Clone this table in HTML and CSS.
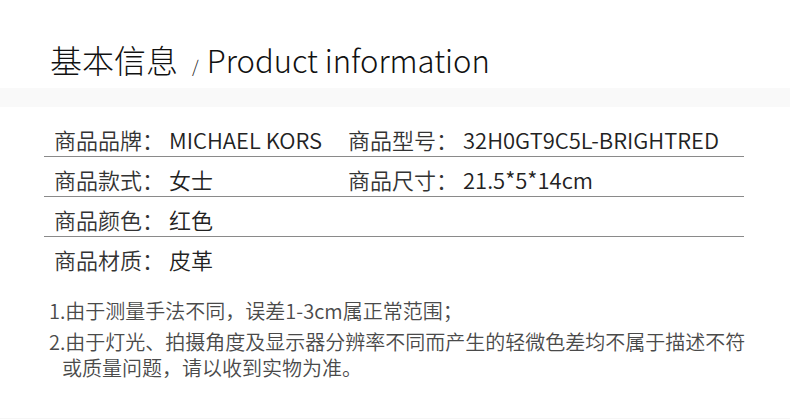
FILE: index.html
```html
<!DOCTYPE html>
<html lang="zh-CN">
<head>
<meta charset="utf-8">
<title>基本信息</title>
<link rel="stylesheet" href="styles.css">
</head>
<body>
<div class="page">
  <header class="head">
    <h1 class="title"><span class="title-cn">基本信息</span><span class="slash">/</span><span class="title-en">Product information</span></h1>
  </header>
  <div class="band"></div>
  <div class="table">
    <div class="row">
      <div class="cell"><span class="label">商品品牌：</span><span class="value">MICHAEL KORS</span></div>
      <div class="cell"><span class="label">商品型号：</span><span class="value">32H0GT9C5L-BRIGHTRED</span></div>
    </div>
    <div class="row">
      <div class="cell"><span class="label">商品款式：</span><span class="value">女士</span></div>
      <div class="cell"><span class="label">商品尺寸：</span><span class="value">21.5*5*14cm</span></div>
    </div>
    <div class="row">
      <div class="cell"><span class="label">商品颜色：</span><span class="value">红色</span></div>
      <div class="cell"></div>
    </div>
    <div class="row last">
      <div class="cell"><span class="label">商品材质：</span><span class="value">皮革</span></div>
      <div class="cell"></div>
    </div>
  </div>
  <div class="notes">
    <p class="note">1.由于测量手法不同，误差1-3cm属正常范围；</p>
    <p class="note">2.由于灯光、拍摄角度及显示器分辨率不同而产生的轻微色差均不属于描述不符或质量问题，请以收到实物为准。</p>
  </div>
  <div class="foot"></div>
</div>
</body>
</html>
```

FILE: styles.css
```css
* { box-sizing: border-box; }
html, body {
  margin: 0;
  padding: 0;
  background: #ffffff;
}
body {
  font-family: "Noto Sans CJK SC", "Noto Sans", sans-serif;
  color: #222;
}
.page {
  width: 790px;
  height: 419px;
  display: flex;
  flex-direction: column;
  overflow: hidden;
}
.head {
  height: 88px;
  padding: 35px 0 0 50px;
}
.title {
  margin: 0;
  font-weight: 300;
  font-size: 32px;
  line-height: 48px;
  color: #111;
  display: flex;
  align-items: baseline;
  white-space: nowrap;
}
.title-cn { font-weight: 300; }
.slash {
  font-size: 17px;
  margin: 0 8px 0 14px;
  color: #222;
}
.title-en {
  font-size: 31px;
  font-weight: 300;
}
.band {
  height: 19px;
  background: #f9f9f9;
}
.table {
  margin: 10px 46px 0 44px;
}
.row {
  display: grid;
  grid-template-columns: 294px 1fr;
  padding: 5px 0 0 10px;
  height: 40px;
  border-bottom: 1px solid #8a8a8a;
  font-size: 22px;
  font-weight: 350;
  line-height: 34px;
  white-space: nowrap;
}
.row.last { border-bottom: 0; }
.cell { display: flex; }
.label {
  width: 115px;
  color: #333;
}
.value {
  color: #222;
}
.notes {
  margin: 21px 0 0 49px;
  width: 710px;
  font-size: 20px;
  font-weight: 350;
  line-height: 26px;
  color: #4a4a4a;
}
.note {
  margin: 0 0 5px 0;
  padding-left: 13px;
  text-indent: -13px;
}
.foot {
  margin-top: auto;
  height: 1px;
  background: #f6f6f6;
}
```
